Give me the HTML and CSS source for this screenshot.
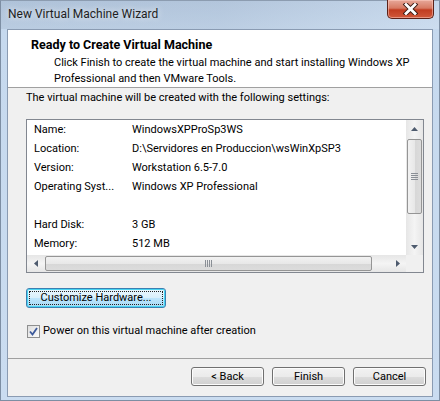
FILE: index.html
```html
<!DOCTYPE html>
<html lang="en">
<head>
    <meta charset="UTF-8">
    <title>New Virtual Machine Wizard</title>
    <link rel="stylesheet" href="styles.css">
</head>
<body>

    <!-- Window frame -->
    <div class="window">
        <div class="titlebar">
            <span class="title">New Virtual Machine Wizard</span>
            <div class="close">
                <svg width="19" height="12" viewBox="0 0 19 12">
                    <path d="M5 1.5 L14 10.5 M14 1.5 L5 10.5" stroke="#3b1a14" stroke-width="4.6" stroke-linecap="square"/>
                    <path d="M5 1.5 L14 10.5 M14 1.5 L5 10.5" stroke="#ffffff" stroke-width="2.8" stroke-linecap="square"/>
                </svg>
            </div>
        </div>

        <div class="client">
            <!-- Header -->
            <div class="header">
                <div class="header-title">Ready to Create Virtual Machine</div>
                <div class="header-sub">Click Finish to create the virtual machine and start installing Windows XP Professional and then VMware Tools.</div>
            </div>

            <!-- Body -->
            <div class="body">
                <div class="intro">The virtual machine will be created with the following settings:</div>

                <div class="listbox">
                    <div class="list">
                        <div class="row"><span class="key">Name:</span><span>WindowsXPProSp3WS</span></div>
                        <div class="row"><span class="key">Location:</span><span>D:\Servidores en Produccion\wsWinXpSP3</span></div>
                        <div class="row"><span class="key">Version:</span><span>Workstation 6.5-7.0</span></div>
                        <div class="row"><span class="key">Operating Syst...</span><span>Windows XP Professional</span></div>
                        <div class="row"><span class="key"></span><span></span></div>
                        <div class="row"><span class="key">Hard Disk:</span><span>3 GB</span></div>
                        <div class="row"><span class="key">Memory:</span><span>512 MB</span></div>
                    </div>

                    <!-- vertical scrollbar -->
                    <div class="vscroll">
                        <div class="arrow"><svg width="7" height="4" viewBox="0 0 7 4"><path d="M0 4 L3.5 0 L7 4 Z" fill="#4e5b6e"/></svg></div>
                        <div class="vtrack">
                            <div class="vthumb">
                                <svg width="7" height="8" viewBox="0 0 7 8"><path d="M0 .5 H7 M0 2.5 H7 M0 4.5 H7 M0 6.5 H7" stroke="#8a8f96" stroke-width="1"/></svg>
                            </div>
                        </div>
                        <div class="arrow"><svg width="7" height="4" viewBox="0 0 7 4"><path d="M0 0 L3.5 4 L7 0 Z" fill="#4e5b6e"/></svg></div>
                    </div>

                    <!-- horizontal scrollbar -->
                    <div class="hscroll">
                        <div class="arrow"><svg width="4" height="7" viewBox="0 0 4 7"><path d="M4 0 L0 3.5 L4 7 Z" fill="#4e5b6e"/></svg></div>
                        <div class="htrack">
                            <div class="hthumb">
                                <svg width="8" height="7" viewBox="0 0 8 7"><path d="M.5 0 V7 M2.5 0 V7 M4.5 0 V7 M6.5 0 V7" stroke="#8a8f96" stroke-width="1"/></svg>
                            </div>
                        </div>
                        <div class="arrow"><svg width="4" height="7" viewBox="0 0 4 7"><path d="M0 0 L4 3.5 L0 7 Z" fill="#4e5b6e"/></svg></div>
                    </div>
                    <div class="corner"></div>
                </div>

                <button class="btn btn-focus"><span>Customize Hardware...</span></button>

                <label class="check">
                    <span class="box">
                        <svg width="9" height="9" viewBox="0 0 9 9"><path d="M1 4.5 L3.5 7.5 L8 1" fill="none" stroke="#3d5a9b" stroke-width="1.8"/></svg>
                    </span>
                    Power on this virtual machine after creation
                </label>
            </div>

            <!-- Footer -->
            <div class="footer">
                <button class="btn">&lt; Back</button>
                <button class="btn">Finish</button>
                <button class="btn">Cancel</button>
            </div>
        </div>
    </div>

</body>
</html>
```

FILE: styles.css
```css
/* General Page Styling */
body {
    margin: 0;
    padding: 0;
    background: #c9dbef;
    font-family: 'Roboto', 'Open Sans', sans-serif;
    font-size: 11px;
    color: #000;
}

/* Aero window frame */
.window {
    width: 440px;
    height: 401px;
    box-sizing: border-box;
    display: flex;
    flex-direction: column;
    background: linear-gradient(180deg, #b9cde4 0px, #c6d9ee 30px, #cadcf0 100%);
    border: 1px solid #7d8ea3;
    border-top-color: #8c9cb0;
}

.titlebar {
    height: 28px;
    display: flex;
    justify-content: space-between;
    align-items: flex-start;
    padding-left: 7px;
    background: linear-gradient(90deg, rgba(120, 135, 155, 0.15), rgba(160, 175, 195, 0.25) 50%, rgba(215, 228, 242, 0.4));
}

.title {
    margin-top: 6px;
    font-size: 12px;
    color: #1e1e1e;
    text-shadow: 0 0 6px rgba(255, 255, 255, 0.9);
}

.close {
    width: 45px;
    height: 18px;
    margin-right: 5px;
    margin-top: -1px;
    display: flex;
    align-items: center;
    justify-content: center;
    border: 1px solid #5b2118;
    border-top: none;
    border-radius: 0 0 5px 5px;
    background: linear-gradient(180deg, #e7a899 0%, #d77a63 45%, #c13c20 55%, #d0583a 100%);
    box-shadow: inset 0 0 0 1px rgba(255, 210, 200, 0.5);
}

/* Client area */
.client {
    flex: 1;
    margin: 0 6px 3px 6px;
    display: flex;
    flex-direction: column;
    background: #f0f0f0;
    border: 1px solid #8a9bb2;
}

.header {
    height: 58px;
    box-sizing: border-box;
    background: #fff;
    border-bottom: 1px solid #a0a0a0;
    padding: 6px 20px 0 23px;
}

.header-title {
    font-weight: bold;
    font-size: 12.5px;
    line-height: 17px;
}

.header-sub {
    padding-left: 23px;
    margin-top: 2px;
    line-height: 16px;
}

.body {
    flex: 1;
    padding: 2px 10px 0 18px;
    display: flex;
    flex-direction: column;
    align-items: flex-start;
}

.intro {
    line-height: 16px;
}

/* Settings list box with scrollbars */
.listbox {
    margin-top: 13px;
    width: 398px;
    height: 154px;
    box-sizing: border-box;
    border: 1px solid #828790;
    background: #fff;
    display: grid;
    grid-template-columns: 1fr 17px;
    grid-template-rows: 1fr 17px;
}

.list {
    padding: 0 0 0 7px;
    overflow: hidden;
}

.row {
    display: flex;
    height: 19px;
    line-height: 19px;
    white-space: nowrap;
}

.key {
    width: 98px;
    flex-shrink: 0;
}

.vscroll {
    display: flex;
    flex-direction: column;
    background: linear-gradient(90deg, #e6e6e6, #f4f4f4 50%, #e6e6e6);
}

.hscroll {
    display: flex;
    background: linear-gradient(180deg, #e6e6e6, #f4f4f4 50%, #e6e6e6);
}

.arrow {
    width: 17px;
    height: 17px;
    display: flex;
    align-items: center;
    justify-content: center;
    flex-shrink: 0;
}

.vtrack {
    flex: 1;
    padding: 1px 1px;
}

.vthumb {
    height: 75px;
    margin-top: 1px;
    box-sizing: border-box;
    border: 1px solid #959595;
    border-radius: 2px;
    background: linear-gradient(90deg, #f2f2f2, #e8e8e8 50%, #d7d7d7 51%, #dcdcdc);
    display: flex;
    align-items: center;
    justify-content: center;
}

.htrack {
    flex: 1;
    padding: 1px 1px;
}

.hthumb {
    width: 327px;
    height: 100%;
    box-sizing: border-box;
    border: 1px solid #959595;
    border-radius: 2px;
    background: linear-gradient(180deg, #f2f2f2, #e8e8e8 50%, #d7d7d7 51%, #dcdcdc);
    display: flex;
    align-items: center;
    justify-content: center;
}

.corner {
    background: #f0f0f0;
}

/* Buttons */
.btn {
    font-family: inherit;
    font-size: 11px;
    color: #000;
    height: 20px;
    padding: 0;
    border: 1px solid #707070;
    border-radius: 3px;
    background: linear-gradient(180deg, #f2f2f2 0%, #ebebeb 50%, #dddddd 51%, #cfcfcf 100%);
    box-shadow: inset 0 0 0 1px #fcfcfc;
}

.btn-focus {
    margin-top: 15px;
    width: 140px;
    border-color: #3c7fb1;
    box-shadow: inset 0 0 0 1px #48d5f2;
    background: linear-gradient(180deg, #eaf6fd 0%, #d9f0fc 50%, #bee6fd 51%, #a7d9f5 100%);
}

.btn-focus span {
    display: block;
    margin: 2px;
    line-height: 12px;
    border: 1px dotted #222;
}

.check {
    margin-top: 15px;
    display: flex;
    align-items: center;
    gap: 3px;
    margin-left: 1px;
    line-height: 16px;
}

.box {
    width: 13px;
    height: 13px;
    box-sizing: border-box;
    border: 1px solid #8e8f8f;
    background: linear-gradient(135deg, #dedede, #fbfbfb);
    display: flex;
    align-items: center;
    justify-content: center;
}

/* Footer with wizard buttons */
.footer {
    height: 38px;
    box-sizing: border-box;
    border-top: 1px solid #a0a0a0;
    display: flex;
    justify-content: flex-end;
    align-items: flex-start;
    gap: 8px;
    padding: 8px 6px 0 0;
}

.footer .btn {
    width: 73px;
    height: 19px;
}
```
